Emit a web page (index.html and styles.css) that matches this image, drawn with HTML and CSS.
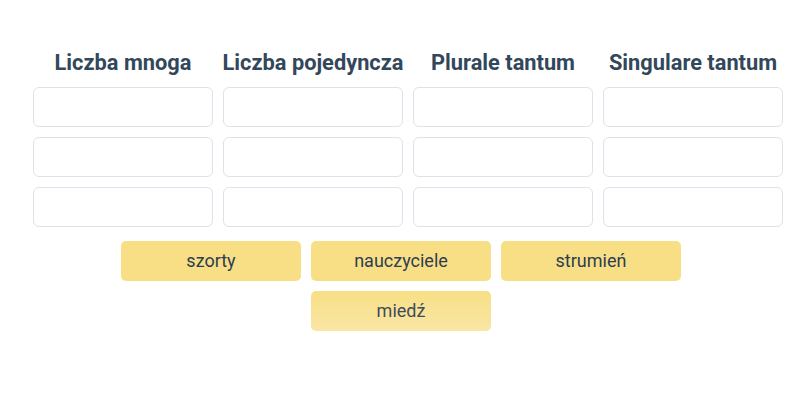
FILE: index.html
```html
<!DOCTYPE html>
<html lang="pl">
<head>
    <meta charset="UTF-8">
    <title>Grupuj rzeczowniki</title>
    <link rel="stylesheet" href="styles.css">
</head>
<body>
    <div class="board">
        <div class="columns">
            <h3 class="col-title">Liczba mnoga</h3>
            <h3 class="col-title">Liczba pojedyncza</h3>
            <h3 class="col-title">Plurale tantum</h3>
            <h3 class="col-title">Singulare tantum</h3>

            <div class="slot"></div>
            <div class="slot"></div>
            <div class="slot"></div>
            <div class="slot"></div>

            <div class="slot"></div>
            <div class="slot"></div>
            <div class="slot"></div>
            <div class="slot"></div>

            <div class="slot"></div>
            <div class="slot"></div>
            <div class="slot"></div>
            <div class="slot"></div>
        </div>

        <div class="pool">
            <div class="chip">szorty</div>
            <div class="chip">nauczyciele</div>
            <div class="chip">strumień</div>
            <div class="chip chip-fading">miedź</div>
        </div>
    </div>
</body>
</html>
```

FILE: styles.css
```css
body {
    margin: 0;
    background: #fff;
    font-family: Roboto, "Noto Sans", sans-serif;
    color: #2c3e50;
}
.board {
    padding-top: 50px;
}
.columns {
    display: grid;
    grid-template-columns: repeat(4, 180px);
    column-gap: 10px;
    row-gap: 10px;
    margin-left: 33px;
    width: 750px;
}
.col-title {
    margin: 0 -10px 1px;
    text-align: center;
    font-size: 21.8px;
    line-height: 26px;
    font-weight: 700;
    color: #33475b;
    white-space: nowrap;
}
.slot {
    height: 38px;
    border: 1px solid #dde3e8;
    border-radius: 6px;
    background: #fff;
}
.pool {
    display: flex;
    flex-wrap: wrap;
    justify-content: center;
    gap: 10px;
    width: 560px;
    margin: 14px 0 0 121px;
}
.chip {
    width: 180px;
    height: 40px;
    line-height: 40px;
    text-align: center;
    font-size: 18px;
    background: #f8df85;
    border-radius: 5px;
    color: #2c3e50;
}
.chip-fading {
    background: linear-gradient(#f8df85, #f9e6a6);
    color: #3b4c5d;
}
```
